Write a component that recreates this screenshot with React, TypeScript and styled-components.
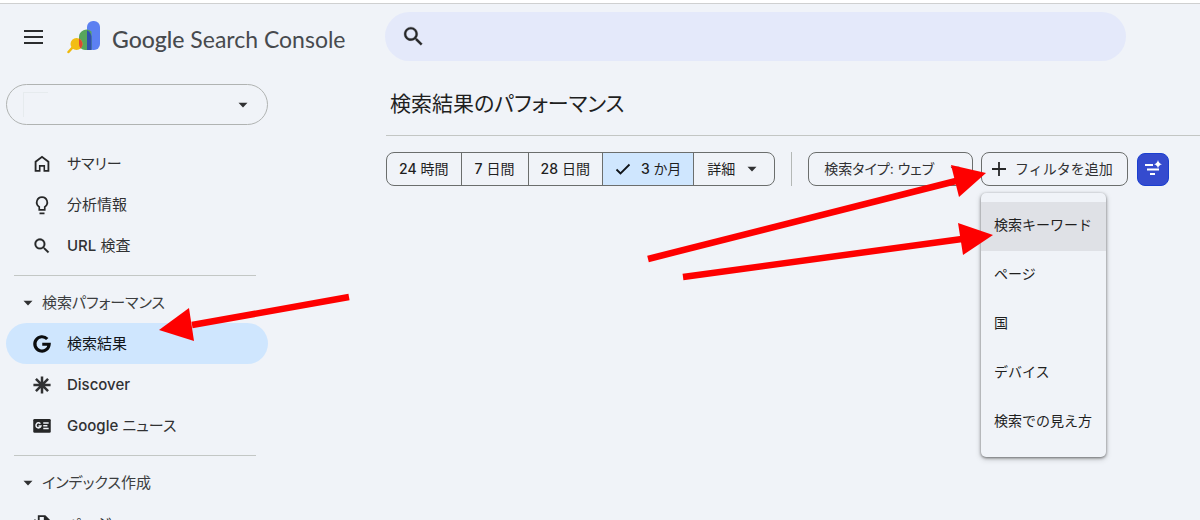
import React from "react";
import styled, { createGlobalStyle } from "styled-components";

const GlobalStyle = createGlobalStyle`
  * { box-sizing: border-box; }
  body {
    margin: 0;
    background: #f0f3f8;
    color: #1f1f1f;
    font-family: Inter, "Noto Sans CJK JP", sans-serif;
    font-feature-settings: "palt";
    font-size: 15px;
    line-height: 20px;
  }
  button, input, select { font: inherit; color: inherit; font-feature-settings: inherit; }
`;

const Shell = styled.div`
  position: relative;
  height: 100vh;
  overflow: hidden;
  border-top: 3px solid #ffffff;
`;

const Header = styled.header`
  display: flex;
  align-items: flex-start;
  height: 68px;
  padding-top: 8px;
  border-top: 1px solid #cfd0d0;
`;

const Brand = styled.div`
  display: flex;
  align-items: center;
  flex: 0 0 385px;
  height: 51px;
  padding-left: 24px;
`;

const IconButton = styled.button`
  display: flex;
  padding: 0 0 2px;
  border: 0;
  background: none;
`;

const BrandLink = styled.a`
  display: flex;
  align-items: center;
  gap: 11px;
  margin-left: 23px;
  color: #474a4e;
  font-family: Lato, sans-serif;
  font-size: 23px;
  line-height: 32px;
  text-decoration: none;
  white-space: nowrap;
`;

const BrandName = styled.span`
  padding-top: 2px;
`;

const BrandStrong = styled.span`
  font-family: "Lato Medium", Lato, sans-serif;
  font-weight: 500;
`;

const SearchBox = styled.label`
  display: flex;
  align-items: center;
  gap: 16px;
  flex: 1;
  height: 49px;
  margin-right: 74px;
  padding: 0 16px;
  border-radius: 25px;
  background: #e4e9fa;
`;

const SearchInput = styled.input`
  flex: 1;
  border: 0;
  outline: 0;
  background: transparent;
`;

const Body = styled.div`
  display: flex;
`;

const Sidebar = styled.aside`
  flex: 0 0 386px;
  padding: 13px 0 0 6px;
`;

const PropertyField = styled.label`
  position: relative;
  display: block;
  width: 262px;
  height: 41px;
  margin-bottom: 18px;

  svg {
    position: absolute;
    right: 20px;
    top: 16px;
    pointer-events: none;
  }

  &::before {
    content: "";
    position: absolute;
    left: 17px;
    top: 8px;
    width: 24px;
    height: 24px;
    border-top: 1px solid #e6ebee;
    border-left: 1px solid #e6ebee;
  }
`;

const PropertySelect = styled.select`
  width: 100%;
  height: 100%;
  padding: 0 24px;
  appearance: none;
  border: 1px solid #b0b3b2;
  border-radius: 21px;
  background: transparent;
`;

const NavLink = styled.a<{ $active?: boolean }>`
  display: flex;
  align-items: center;
  gap: 15px;
  width: 262px;
  height: 41px;
  padding-left: 26px;
  border-radius: 21px;
  background: ${(p) => (p.$active ? "#cfe6fe" : "transparent")};
  color: ${(p) => (p.$active ? "#101418" : "#303133")};
  text-decoration: none;
`;

const Latin = styled.span`
  font-weight: 500;
`;

const Rule = styled.hr`
  width: 242px;
  height: 1px;
  margin: 9px 0 6px 8px;
  border: 0;
  background: #c3c7c5;
`;

const GroupButton = styled.button`
  display: flex;
  align-items: center;
  gap: 9px;
  height: 41px;
  padding: 0 0 0 17px;
  border: 0;
  background: none;
  color: #3c3e40;
`;

const Main = styled.main`
  flex: 1;
  min-width: 0;
`;

const TitleBar = styled.div`
  height: 65px;
  padding: 18px 4px 16px;
  border-bottom: 1px solid #c3c6c4;
`;

const Title = styled.h1`
  margin: 0;
  font-size: 21px;
  font-weight: 400;
  line-height: 30px;
`;

const Toolbar = styled.div`
  display: flex;
  align-items: center;
  padding-top: 16px;
  font-size: 14px;
`;

const Segments = styled.div`
  display: flex;
  height: 34px;
  border: 1px solid #6b6e6d;
  border-radius: 8px;
  overflow: hidden;
`;

const Segment = styled.button<{ $selected?: boolean }>`
  display: flex;
  align-items: center;
  justify-content: center;
  gap: 10px;
  min-width: 67px;
  padding: 0 12px;
  border: 0;
  background: ${(p) => (p.$selected ? "#cfe6fe" : "transparent")};
  white-space: nowrap;

  & + & { border-left: 1px solid #6b6e6d; }
`;

const MoreSegment = styled(Segment)`
  gap: 12px;
  padding: 0 17px 0 13px;
`;

const Separator = styled.div`
  width: 1px;
  height: 34px;
  margin: 0 16px;
  background: #b4b8b6;
`;

const Chip = styled.button`
  display: flex;
  align-items: center;
  gap: 9px;
  height: 34px;
  padding: 0 14px 0 10px;
  border: 1px solid #6b6e6d;
  border-radius: 8px;
  background: none;
  color: #303133;
  white-space: nowrap;
`;

const TypeChip = styled(Chip)`
  gap: 16px;
  margin-right: 8px;
  padding: 0 12px 0 15px;
`;

const FilterAnchor = styled.div`
  position: relative;
  margin-right: 9px;
  font-feature-settings: normal;
`;

const Menu = styled.div`
  position: absolute;
  left: 0;
  top: 41px;
  width: 125px;
  padding: 9px 0 10px;
  border-radius: 5px;
  background: #f0f3f8;
  box-shadow: 0 1px 3px rgba(0, 0, 0, 0.5), 0 2px 6px rgba(0, 0, 0, 0.18);
`;

const MenuItem = styled.button<{ $active?: boolean }>`
  display: block;
  width: 100%;
  height: 49px;
  padding: 0 13px 3px;
  border: 0;
  background: ${(p) => (p.$active ? "#dfe1e6" : "transparent")};
  text-align: left;
  white-space: nowrap;
`;

const AssistButton = styled.button`
  display: flex;
  align-items: center;
  justify-content: center;
  width: 32px;
  height: 33px;
  padding: 0;
  border: 1px solid #1a3fd0;
  border-radius: 8px;
  background: #354bce;
`;

const Annotations = styled.svg`
  position: absolute;
  left: 0;
  top: -3px;
  pointer-events: none;
`;

const Caret = () => (
  <svg width="10" height="10" viewBox="0 0 10 10" aria-hidden="true">
    <path d="M0.5 2.8h9L5 7.4z" fill="#303133" />
  </svg>
);

const Glyph = ({ children, size = 20 }: { children: React.ReactNode; size?: number }) => (
  <svg width={size} height={size} viewBox="0 0 24 24" fill="#262728" aria-hidden="true">
    {children}
  </svg>
);

const searchPath =
  "M15.5 14h-.79l-.28-.27C15.41 12.59 16 11.11 16 9.5 16 5.91 13.09 3 9.5 3S3 5.91 3 9.5 5.91 16 9.5 16c1.61 0 3.09-.59 4.23-1.57l.27.28v.79l5 4.99L20.49 19l-4.99-5zm-6 0C7.01 14 5 11.99 5 9.5S7.01 5 9.5 5 14 7.01 14 9.5 11.99 14 9.5 14z";

const HomeIcon = () => (
  <Glyph><path d="M5.4 19.100h2.900v-5.800h7.400v5.800h2.900V9.900L12 4.900 5.4 9.900zM3.200 21.300V8.800L12 2.200l8.800 6.600v12.500h-7v-5.900h-3.600v5.900z" /></Glyph>
);
const BulbIcon = () => (
  <Glyph><path d="M9 21h6v2H9zM12 1.500a7.300 7.300 0 0 0-4.300 13.200V18.800h8.600V14.700A7.300 7.300 0 0 0 12 1.500zm3.100 11.700-.8.600v3H9.700v-3l-.8-.6a5.300 5.300 0 1 1 6.200 0z" /></Glyph>
);
const SearchIcon = ({ size = 20 }: { size?: number }) => (
  <Glyph size={size}><path d={searchPath} stroke="#262728" strokeWidth="0.3" /></Glyph>
);
const GoogleIcon = () => (
  <Glyph>
    <path
      d="M18.300 6A8.600 8.600 0 1 0 20.600 12.300H12.300"
      fill="none"
      stroke="#0b0d0f"
      strokeWidth="3.800"
    />
  </Glyph>
);
const DiscoverIcon = () => (
  <Glyph>
    <path
      d="M12 1.700v20.600M1.700 12h20.600M4.700 4.700l14.600 14.600M19.300 4.700L4.700 19.300"
      stroke="#303133"
      strokeWidth="3"
    />
  </Glyph>
);
const NewsIcon = () => (
  <Glyph>
    <rect x="1.500" y="3.500" width="21" height="16.500" rx="1.500" />
    <path d="M10 9.200A3 3 0 1 0 10.700 12H7.800" fill="none" stroke="#f0f3f8" strokeWidth="1.800" />
    <path d="M13.500 8.500h6.500M13.500 11.800h5M13.500 15.100h6.500" stroke="#f0f3f8" strokeWidth="1.800" />
  </Glyph>
);
const PagesIcon = () => (
  <Glyph>
    <path d="M7 1.500h9l6 6V19H7zm2.200 2.200v13h10.500V9h-5.500V3.700zM2.500 6.500h2v14.700h12v2h-14z" />
  </Glyph>
);

const Logo = () => (
  <svg width="34" height="33" viewBox="0 0 34 33" aria-hidden="true">
    <rect x="20" y="0" width="13" height="29" rx="6" fill="#5c80f1" />
    <path d="M12 16a7.500 7.500 0 0 1 12.500-5.500V29H18a6 6 0 0 1-6-6z" fill="#58a55c" />
    <path d="M20 9.300q4.500 2 4.500 8V29H20z" fill="#2f4fae" />
    <path d="M6 26 1.500 31" stroke="#f0b90b" strokeWidth="2.500" strokeLinecap="round" />
    <circle cx="9.500" cy="23" r="6" fill="#f2bd13" />
    <path d="M12 17.600a6 6 0 0 1 1.500 9.900A7 7 0 0 1 12 23z" fill="#dd4635" />
  </svg>
);

const arrows = [
  { tail: [349, 297], neck: [192, 325], head: "159,330 189,308 194,341" },
  { tail: [648, 259], neck: [956, 181], head: "986,173 951,165 959,197" },
  { tail: [683, 277], neck: [962, 239], head: "993,235 958,223 963,255" },
];

const menuItems = ["検索キーワード", "ページ", "国", "デバイス", "検索での見え方"];

export default function App() {
  return (
    <Shell>
      <GlobalStyle />
      <Header>
        <Brand>
          <IconButton aria-label="メニュー">
            <svg width="20" height="16" viewBox="0 0 20 16" aria-hidden="true">
              <path d="M0 2h19M0 8h19M0 14h19" stroke="#2b2c2e" strokeWidth="2" />
            </svg>
          </IconButton>
          <BrandLink href="#">
            <Logo />
            <BrandName><BrandStrong>Google</BrandStrong> Search Console</BrandName>
          </BrandLink>
        </Brand>
        <SearchBox aria-label="検索">
          <SearchIcon size={25} />
          <SearchInput type="text" />
        </SearchBox>
      </Header>
      <Body>
        <Sidebar>
          <PropertyField aria-label="プロパティ">
            <PropertySelect aria-label="プロパティ"><option value="" /></PropertySelect>
            <Caret />
          </PropertyField>
          <nav>
            <NavLink href="#"><HomeIcon />サマリー</NavLink>
            <NavLink href="#"><BulbIcon />分析情報</NavLink>
            <NavLink href="#"><SearchIcon /><span><Latin>URL</Latin> 検査</span></NavLink>
            <Rule />
            <GroupButton aria-expanded="true"><Caret />検索パフォーマンス</GroupButton>
            <NavLink href="#" $active aria-current="page"><GoogleIcon />検索結果</NavLink>
            <NavLink href="#"><DiscoverIcon /><Latin>Discover</Latin></NavLink>
            <NavLink href="#"><NewsIcon /><span><Latin>Google</Latin> ニュース</span></NavLink>
            <Rule />
            <GroupButton aria-expanded="true"><Caret />インデックス作成</GroupButton>
            <NavLink href="#"><PagesIcon />ページ</NavLink>
          </nav>
        </Sidebar>
        <Main>
          <TitleBar><Title>検索結果のパフォーマンス</Title></TitleBar>
          <Toolbar>
            <Segments>
              <Segment><span><Latin>24</Latin> 時間</span></Segment>
              <Segment><span><Latin>7</Latin> 日間</span></Segment>
              <Segment><span><Latin>28</Latin> 日間</span></Segment>
              <Segment $selected aria-pressed="true">
                <svg width="16" height="16" viewBox="0 0 16 16" aria-hidden="true">
                  <path d="M1.500 8.500l4 4L14.500 3.500" fill="none" stroke="#101418" strokeWidth="1.800" />
                </svg>
                <span><Latin>3</Latin> か月</span>
              </Segment>
              <MoreSegment>詳細<Caret /></MoreSegment>
            </Segments>
            <Separator />
            <TypeChip>検索タイプ: ウェブ<Caret /></TypeChip>
            <FilterAnchor>
              <Chip aria-expanded="true">
                <svg width="14" height="14" viewBox="0 0 14 14" aria-hidden="true">
                  <path d="M7 0v14M0 7h14" stroke="#262728" strokeWidth="1.800" />
                </svg>
                フィルタを追加
              </Chip>
              <Menu role="menu">
                {menuItems.map((label, i) => (
                  <MenuItem key={label} role="menuitem" $active={i === 0}>{label}</MenuItem>
                ))}
              </Menu>
            </FilterAnchor>
            <AssistButton aria-label="AI フィルタ">
              <svg width="20" height="20" viewBox="0 0 20 20" aria-hidden="true">
                <path d="M2 6h8M4 10.500h12M7 15h5" stroke="#fff" strokeWidth="1.800" />
                <path d="M15 1q.7 3.500 4 4.200-3.300.7-4 4.200-.7-3.500-4-4.200 3.300-.7 4-4.200z" fill="#fff" />
              </svg>
            </AssistButton>
          </Toolbar>
        </Main>
      </Body>
      <Annotations width="1200" height="520" viewBox="0 0 1200 520" aria-hidden="true">
        {arrows.map((a) => (
          <g key={a.head} fill="#fe0000" stroke="none">
            <path d={`M${a.tail.join(" ")}L${a.neck.join(" ")}`} stroke="#fe0000" strokeWidth="6.500" />
            <polygon points={a.head} />
          </g>
        ))}
      </Annotations>
    </Shell>
  );
}
